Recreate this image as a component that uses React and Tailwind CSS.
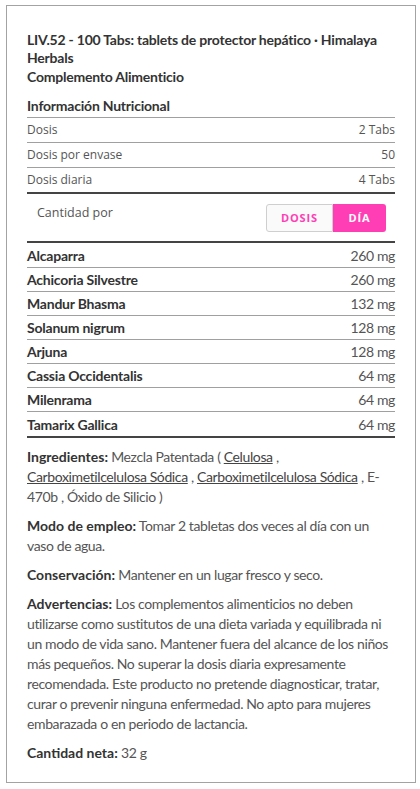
import React from 'react';

const dosisRows = [
  { label: 'Dosis', value: '2 Tabs' },
  { label: 'Dosis por envase', value: '50' },
  { label: 'Dosis diaria', value: '4 Tabs' },
];

const ingredients = [
  { name: 'Alcaparra', amount: '260 mg' },
  { name: 'Achicoria Silvestre', amount: '260 mg' },
  { name: 'Mandur Bhasma', amount: '132 mg' },
  { name: 'Solanum nigrum', amount: '128 mg' },
  { name: 'Arjuna', amount: '128 mg' },
  { name: 'Cassia Occidentalis', amount: '64 mg' },
  { name: 'Milenrama', amount: '64 mg' },
  { name: 'Tamarix Gallica', amount: '64 mg' },
];

const App = () => {
  return (
    <div className="min-h-screen bg-white pl-[6px] pt-[5px] font-['Lato',sans-serif] text-[14px] tracking-[-0.38px] text-[#555]">
      <div className="w-[410px] border border-[#a3a3a3] px-[20px] pt-[25px] pb-[19px]">

        {/* Title */}
        <h1 className="font-bold text-[#333] leading-[18px] tracking-[-0.22px]">
          LIV.52 - 100 Tabs: tablets de protector hepático · Himalaya Herbals
        </h1>
        <p className="font-bold text-[#333] leading-[19px] tracking-[-0.22px]">Complemento Alimenticio</p>

        {/* Nutrition table */}
        <h2 className="mt-[10px] pb-[1px] font-bold text-[#333] leading-[20px] tracking-[-0.22px] border-b border-[#a0a0a0]">
          Información Nutricional
        </h2>
        {dosisRows.map((row, i) => (
          <div
            key={row.label}
            className={`flex items-center justify-between font-['Open_Sans',sans-serif] text-[12px] tracking-normal text-[#555] ${
              i === dosisRows.length - 1 ? 'h-[26px] border-b-2 border-[#444]' : 'h-[25px] border-b border-[#a0a0a0]'
            }`}
          >
            <span>{row.label}</span>
            <span>{row.value}</span>
          </div>
        ))}

        <div className="flex items-start justify-between pl-[10px] pr-[9px] pt-[10px] pb-[9px] border-b-2 border-[#444]">
          <span className="font-['Open_Sans',sans-serif] text-[12.5px] leading-[18px] tracking-normal text-[#555]">Cantidad por</span>
          <div className="flex h-[28px]">
            <button className="w-[67px] rounded-l-[3px] border border-[#cfcfcf] bg-[#fafafa] font-['Open_Sans',sans-serif] text-[11px] font-bold tracking-[0.9px] text-[#ff3eb5]">
              DOSIS
            </button>
            <button className="w-[53px] rounded-r-[3px] bg-[#ff3eb5] font-['Open_Sans',sans-serif] text-[11px] font-bold tracking-[0.9px] text-white">
              DÍA
            </button>
          </div>
        </div>

        {ingredients.map((ing, i) => (
          <div
            key={ing.name}
            className={`flex items-center justify-between ${
              i === ingredients.length - 1
                ? 'h-[26px] border-b-2 border-[#444]'
                : i === 0
                ? 'h-[25px] border-b border-[#a0a0a0]'
                : 'h-[24px] border-b border-[#a0a0a0]'
            }`}
          >
            <span className="font-bold text-[#333] tracking-[-0.22px]">{ing.name}</span>
            <span className="text-[#555]">{ing.amount}</span>
          </div>
        ))}

        {/* Details */}
        <div className="mt-[9px] flex flex-col gap-[9px] leading-[20px]">
          <p>
            <b className="text-[#333] tracking-normal">Ingredientes:</b> Mezcla Patentada ({' '}
            <span className="underline text-[#444]">Celulosa</span> ,{' '}
            <span className="underline text-[#444]">Carboximetilcelulosa Sódica</span> ,{' '}
            <span className="underline text-[#444]">Carboximetilcelulosa Sódica</span> , E-<wbr />470b , Óxido de Silicio )
          </p>
          <p>
            <b className="text-[#333] tracking-normal">Modo de empleo:</b> Tomar 2 tabletas dos veces al día con un vaso de agua.
          </p>
          <p>
            <b className="text-[#333] tracking-normal">Conservación:</b> Mantener en un lugar fresco y seco.
          </p>
          <p>
            <b className="text-[#333] tracking-normal">Advertencias:</b> Los complementos alimenticios no deben utilizarse como
            sustitutos de una dieta variada y equilibrada ni un modo de vida sano. Mantener fuera del alcance de los
            niños más pequeños. No superar la dosis diaria expresamente recomendada. Este producto no pretende
            diagnosticar, tratar, curar o prevenir ninguna enfermedad. No apto para mujeres embarazada o en periodo de
            lactancia.
          </p>
          <p>
            <b className="text-[#333] tracking-normal">Cantidad neta:</b> 32 g
          </p>
        </div>
      </div>
    </div>
  );
};

export default App;
